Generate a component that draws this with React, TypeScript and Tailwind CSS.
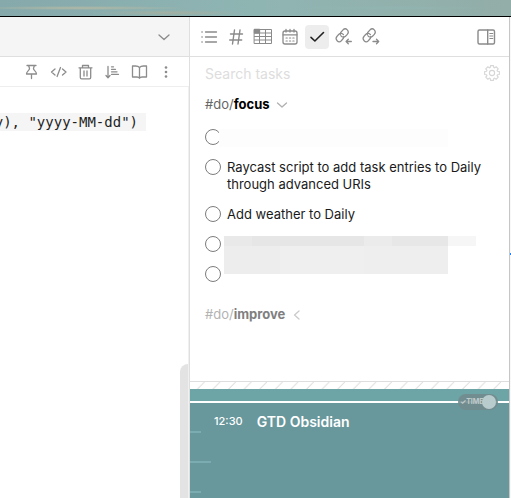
import type { ReactNode } from "react";

type GlyphProps = { children: ReactNode; className?: string };

function Glyph({ children, className = "" }: GlyphProps) {
  return (
    <svg
      viewBox="0 0 24 24"
      className={`block h-6 w-6 ${className}`}
      fill="none"
      stroke="currentColor"
      strokeWidth="1.3"
      strokeLinecap="round"
      strokeLinejoin="round"
      aria-hidden="true"
    >
      {children}
    </svg>
  );
}

const chain = (
  <g transform="translate(3 2.6) scale(0.6 0.64)" strokeWidth="2">
    <path d="M10 13a5 5 0 0 0 7.540.540l3-3a5 5 0 0 0-7.070-7.070l-4 4.200a5 5 0 0 0-.6 3.500" />
    <path d="M14 11a5 5 0 0 0-7.540-.540l-3 3a5 5 0 0 0 7.070 7.070l3.200-3.400a5 5 0 0 0 .8-3" />
  </g>
);

const noteTools: { label: string; icon: ReactNode }[] = [
  {
    label: "Pin",
    icon: (
      <Glyph>
        <path d="M8 5.500h9M9.500 5.500c.3 1.200 1 2.200 1 3.300 0 1.700-3 2.200-3 5.200h10c0-3-3-3.500-3-5.200 0-1.100.7-2.100 1-3.300M12.500 14V18.500" />
      </Glyph>
    ),
  },
  {
    label: "View source",
    icon: (
      <Glyph>
        <path d="M9 9l-3.500 3L9 15M16.500 9l3.500 3L16.500 15M14.500 7.500l-3.400 9" />
      </Glyph>
    ),
  },
  {
    label: "Delete",
    icon: (
      <Glyph>
        <path d="M6 7.800h13M9.500 7.500V5.500h6v2M7.300 8v9.500q0 1.300 1.300 1.300h7.800q1.300 0 1.300-1.300V8M11 11v5M14 11v5" />
      </Glyph>
    ),
  },
  {
    label: "Sort",
    icon: (
      <Glyph>
        <path d="M8 6.500v11M6 15.500l2 2.200 2-2.200M11.500 6.800h2M11.500 9.300h4M11.500 11.800h5.500M11.500 14.300h7" />
      </Glyph>
    ),
  },
  {
    label: "Reading view",
    icon: (
      <Glyph>
        <path d="M12.500 7.500C11.500 6.300 10 6 8.500 6h-3v11h4.500c1.200 0 2 .4 2.500 1.200.5-.8 1.300-1.200 2.500-1.200h4.500V6h-3c-1.500 0-3 .3-4 1.500zM12.500 7.500v10.500" />
      </Glyph>
    ),
  },
  {
    label: "More options",
    icon: (
      <Glyph>
        <g fill="currentColor" stroke="none">
          <circle cx="12" cy="7.500" r="1.300" />
          <circle cx="12" cy="12" r="1.300" />
          <circle cx="12" cy="16.500" r="1.300" />
        </g>
      </Glyph>
    ),
  },
];

const sideTabs: { label: string; icon: ReactNode; active?: boolean }[] = [
  {
    label: "Outline",
    icon: (
      <Glyph>
        <path d="M5 7h.1M5 12h.1M5 17h.1" strokeWidth="1.600" />
        <path d="M8.500 7h11M8.500 12h11M8.500 17h11" />
      </Glyph>
    ),
  },
  {
    label: "Tags",
    icon: (
      <Glyph>
        <path d="M6.500 9H18.500M5.700 15H17.700M10.500 5l-2 14M16 5l-2 14" strokeWidth="1.400" />
      </Glyph>
    ),
  },
  {
    label: "Table",
    icon: (
      <Glyph>
        <path d="M3.500 4.500h17v14h-17zM8.500 4.500v14M14.500 4.500v14M3.500 8h17M3.500 11.500h17M3.500 15h17" strokeWidth="1" />
        <path d="M3.500 4.500h5V8h-5z" fill="currentColor" />
      </Glyph>
    ),
  },
  {
    label: "Calendar",
    icon: (
      <Glyph>
        <rect x="5" y="6" width="14" height="13" rx="2" />
        <path d="M5 9.800h14M8 4.500V7M12 4.500V7M16 4.500V7" />
        <path d="M8 13h1.300M11.400 13h1.300M14.800 13h1.300M8 16h1.300M11.400 16h1.300M14.800 16h1.300" strokeWidth="1.100" />
      </Glyph>
    ),
  },
  {
    label: "Tasks",
    active: true,
    icon: (
      <Glyph>
        <path d="M6 12.300l3.900 3.700L18.500 7.500" strokeWidth="1.600" />
      </Glyph>
    ),
  },
  {
    label: "Backlinks",
    icon: (
      <Glyph>
        {chain}
        <path d="M19.300 16.500h-5M16.300 14.300l-2.200 2.200 2.200 2.200" />
      </Glyph>
    ),
  },
  {
    label: "Outgoing links",
    icon: (
      <Glyph>
        {chain}
        <path d="M14 16.500h5.500M17.500 14.300l2.200 2.200-2.200 2.200" />
      </Glyph>
    ),
  },
];

const cogPoints = Array.from({ length: 8 }, (_, i) =>
  [
    [-0.32, 5.7],
    [-0.2, 7.5],
    [0.2, 7.5],
    [0.32, 5.7],
  ].map(([offset, radius]) => {
    const angle = (i * Math.PI) / 4 + offset;
    return `${12 + Math.sin(angle) * radius},${12 - Math.cos(angle) * radius}`;
  }),
)
  .flat()
  .join(" ");

function Task({ text, covered, label }: { text?: string; covered?: ReactNode; label?: string }) {
  return (
    <li className="relative">
      <label className="flex min-h-[17px] items-start gap-1.5">
        <input
          type="checkbox"
          aria-label={label}
          className="h-4 w-4 shrink-0 appearance-none rounded-full border border-[#7c7c7c] bg-white"
        />
        {text && <span>{text}</span>}
      </label>
      {covered}
    </li>
  );
}

function NotePane() {
  return (
    <section className="flex w-[190px] shrink-0 flex-col border-r border-[#dfdfdf] bg-white">
      <div className="flex h-10 items-center justify-end border-b border-[#dfdfdf] bg-[#f5f5f5] pr-[13px]">
        <button type="button" aria-label="Show tabs" className="text-[#8a8a8a]">
          <Glyph>
            <path d="M7 10l5 4.500 5-4.500" />
          </Glyph>
        </button>
      </div>
      <div className="flex h-[30px] items-center justify-end gap-[3px] border-b border-[#eeeeee] pr-[11px] text-[#8c8c8c]">
        {noteTools.map((tool) => (
          <button key={tool.label} type="button" aria-label={tool.label}>
            {tool.icon}
          </button>
        ))}
      </div>
      <div className="flex min-h-0 flex-1 flex-col border-r border-[#f0f0f0]">
        <div className="flex justify-end overflow-hidden pt-[26px] pr-[42px]">
          <code className="bg-[#f5f5f5] pr-2 font-['DejaVu_Sans_Mono',monospace] text-[14px] leading-[18px] whitespace-pre text-[#1e1e1e]">
            {'y), "yyyy-MM-dd")'}
          </code>
        </div>
        <div className="mt-auto h-[134px] w-2 self-end rounded-tl-lg bg-[#e3e3e3]" />
      </div>
    </section>
  );
}

function TaskPane() {
  return (
    <div className="flex min-h-0 flex-1 flex-col overflow-hidden">
      <div className="flex h-8 items-center justify-between pr-[5px] pl-[15px]">
        <input
          type="text"
          aria-label="Search tasks"
          placeholder="Search tasks"
          className="w-48 bg-transparent text-[14px] outline-none placeholder:text-[#dddddd]"
        />
        <button type="button" aria-label="Task settings" className="text-[#d6d6d6]">
          <Glyph>
            <polygon points={cogPoints} strokeWidth="1.100" />
            <circle cx="12" cy="12" r="2.600" strokeWidth="1.100" />
          </Glyph>
        </button>
      </div>
      <h2 className="flex h-8 items-center pl-[15px] text-[13px]">
        <span className="text-[#666666]">#do/</span>
        <strong className="font-bold text-black">focus</strong>
        <Glyph className="text-[#b0b0b0]">
          <path d="M7.500 10l4.500 4 4.500-4" />
        </Glyph>
      </h2>
      <ul className="flex flex-col gap-[13px] pt-2 pr-5 pl-[15px] text-[13px] leading-[17px] text-[#1a1a1a]">
        <Task
          label="Hidden task"
          covered={<div className="absolute top-0 left-3.5 h-[18px] w-[229px] bg-[#fdfdfd]" />}
        />
        <Task text="Raycast script to add task entries to Daily through advanced URIs" />
        <Task text="Add weather to Daily" />
        <Task
          label="Hidden task"
          covered={
            <div className="absolute top-0 left-[19px] w-[252px]">
              <div className="flex h-2.5">
                <div className="w-7 bg-[#e9e9e9]" />
                <div className="w-28 bg-[#e6e6e6]" />
                <div className="w-7 bg-[#ebebeb]" />
                <div className="w-14 bg-[#e7e7e7]" />
                <div className="w-7 bg-[#f6f6f6]" />
              </div>
              <div className="flex h-7">
                <div className="w-14 bg-[#ededed]" />
                <div className="w-[84px] bg-[#efefef]" />
                <div className="w-[84px] bg-[#eeeeee]" />
              </div>
            </div>
          }
        />
        <Task label="Hidden task" />
      </ul>
      <h2 className="mt-5 flex h-6 items-center pl-[15px] text-[13px]">
        <span className="text-[#b3b3b3]">#do/</span>
        <strong className="font-bold text-[#808080]">improve</strong>
        <Glyph className="text-[#cacaca]">
          <path d="M14 8l-4.500 4 4.500 4" />
        </Glyph>
      </h2>
    </div>
  );
}

function Timeline() {
  return (
    <section className="shrink-0">
      <svg className="block h-2 w-full border-t border-[#dedede]" aria-hidden="true">
        <defs>
          <pattern id="hatch" width="15.600" height="7" patternUnits="userSpaceOnUse">
            <path d="M7 7.500L14.500 0" stroke="#dddddd" strokeWidth="1" />
          </pattern>
        </defs>
        <rect width="100%" height="100%" fill="url(#hatch)" />
      </svg>
      <div className="relative h-3 bg-[#6da4a6]">
        <label className="absolute top-[5px] right-[11px] z-10 flex h-4 w-10 items-center rounded-full bg-[#728b8d]/90">
          <span className="pl-0.5 text-[7px] font-bold text-[#c0cccc]">✓TIME</span>
          <input
            type="checkbox"
            defaultChecked
            aria-label="Track current time"
            className="absolute right-0.5 h-3.5 w-3.5 appearance-none rounded-full bg-[#b8cccd]"
          />
        </label>
      </div>
      <div className="border-t-2 border-white bg-[#68979c]">
        <div className="flex h-[95px]">
          <div className="flex w-6 flex-col gap-7 pt-7">
            <div className="h-0.5 w-[11px] bg-[#7bacb1]" />
            <div className="h-0.5 w-[21px] bg-[#7bacb1]" />
            <div className="h-0.5 w-[11px] bg-[#7bacb1]" />
          </div>
          <div className="flex h-9 items-center gap-3.5 text-white">
            <time className="text-[11px] font-medium">12:30</time>
            <span className="text-[14px] font-semibold">GTD Obsidian</span>
          </div>
        </div>
      </div>
    </section>
  );
}

export default function App() {
  return (
    <main className="flex h-screen flex-col overflow-hidden bg-white font-['Inter',sans-serif]">
      <div className="h-[17px] shrink-0 border-b border-black bg-linear-to-r from-[#86a9ab] via-[#8fb5b3] to-[#93ada8]">
        <div className="h-full w-full bg-[radial-gradient(ellipse_at_16%_50%,#b4b9a4_0%,transparent_18%),radial-gradient(ellipse_at_33%_80%,#a4b0a1_0%,transparent_16%),radial-gradient(ellipse_at_75%_50%,#91b5b1_0%,transparent_20%)]" />
      </div>
      <div className="flex min-h-0 flex-1">
        <NotePane />
        <section className="flex min-w-0 flex-1 flex-col">
          <nav className="flex h-10 shrink-0 items-center gap-[3px] border-b border-[#dfdfdf] pr-[11px] pl-[7px] text-[#8a8a8a]">
            {sideTabs.map((tab) => (
              <button
                key={tab.label}
                type="button"
                aria-label={tab.label}
                className={tab.active ? "rounded bg-[#ededed] text-[#222222]" : ""}
              >
                {tab.icon}
              </button>
            ))}
            <button type="button" aria-label="Toggle sidebar" className="ml-auto">
              <Glyph>
                <rect x="4" y="5" width="16.500" height="14" rx="1.500" strokeWidth="1.400" />
                <path d="M13.700 5v14" strokeWidth="1.400" />
                <path d="M15.800 8.500h3M15.800 11h3M15.800 13.500h3" strokeWidth="1" />
              </Glyph>
            </button>
          </nav>
          <TaskPane />
          <Timeline />
        </section>
        <div className="w-0.5 shrink-0 border-l border-[#c6c6c9] bg-[#f8f8f8]">
          <div className="mt-[236px] h-0.5 w-px bg-[#1683f5]" />
        </div>
      </div>
    </main>
  );
}
